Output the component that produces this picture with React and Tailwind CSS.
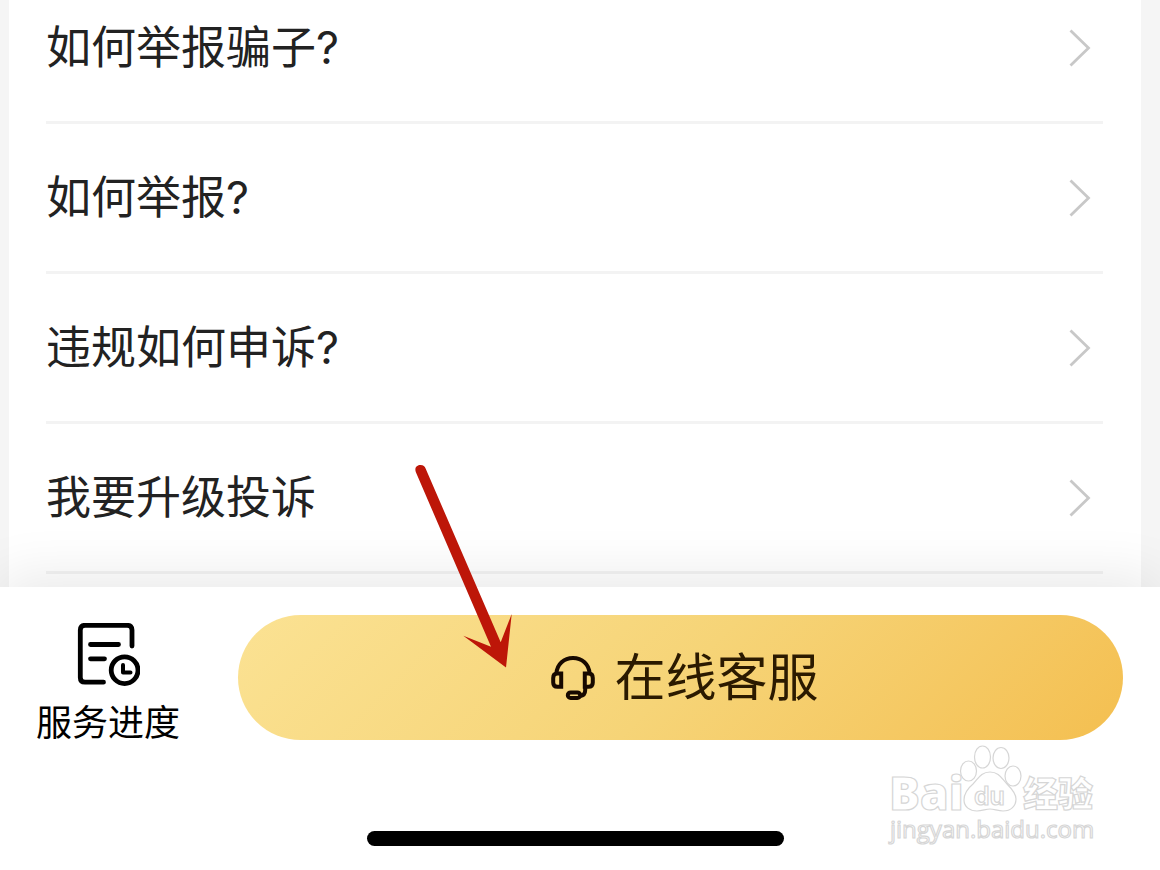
const questions = ['如何举报骗子?', '如何举报?', '违规如何申诉?', '我要升级投诉'];

function ChevronIcon() {
  return (
    <svg viewBox="0 0 24 40" className="h-10 w-6 shrink-0" fill="none" stroke="#c8c8c8" strokeWidth="2.8" aria-hidden="true">
      <path d="M3.5 2.5L21.5 20L3.5 37.5" />
    </svg>
  );
}

function ProgressIcon() {
  return (
    <svg viewBox="-2 1 64 64" className="size-16" fill="none" stroke="#000" strokeWidth="4.8" strokeLinecap="round" strokeLinejoin="round" aria-hidden="true">
      <path d="M54 24V8Q54 3.3 49.3 3.3H7Q2.3 3.3 2.3 8V55.5Q2.3 60.2 7 60.2H25.5" />
      <path d="M12.5 22.5H40.5M12.5 36.8H26.5" />
      <circle cx="46.6" cy="48.2" r="13.4" />
      <path d="M45 43V50.5H52.5" strokeWidth="4" />
    </svg>
  );
}

function HeadsetIcon() {
  return (
    <svg viewBox="0 0 44 46" className="h-[46px] w-11 shrink-0" fill="none" stroke="#170900" strokeWidth="4" aria-hidden="true">
      <path d="M5.4 18.5C6 9 13 3 22 3S38 9 38.6 18.5" />
      <path d="M10.2 18.6H6.5Q2.2 18.6 2.2 23V27.5Q2.2 31.8 6.5 31.8H10.2Z" />
      <path d="M33.8 18.6H37.5Q41.8 18.6 41.8 23V27.5Q41.8 31.8 37.5 31.8H33.8Z" />
      <path d="M34.2 31.5V35Q34.2 40.5 29 41" />
      <rect x="16.8" y="37.4" width="12.4" height="5.6" rx="2.8" />
    </svg>
  );
}

function PointerArrow() {
  return (
    <svg viewBox="0 0 104 210" className="pointer-events-none absolute top-[460px] left-[410px] z-20 h-[210px] w-[104px]" fill="#bd1608" aria-hidden="true">
      <path d="M6 12.5C4 7.5 7 5 10.5 5C13.5 5 14.8 6.5 15.5 8.2L90.7 182.3L101.7 154L96 207.5L53.3 175.7L81 186.7Z" />
    </svg>
  );
}

function Watermark() {
  return (
    <svg viewBox="0 0 220 110" className="pointer-events-none absolute right-[60px] bottom-5 h-[110px] w-[220px]" fill="#fff" stroke="#d6d6d6" strokeWidth="1.2">
      <text x="9" y="70" fontSize="46" fontWeight="800" fontFamily="'Open Sans', sans-serif">Bai</text>
      <ellipse cx="88.5" cy="31" rx="8" ry="10" />
      <ellipse cx="102.5" cy="17" rx="8" ry="11" />
      <ellipse cx="121" cy="18" rx="8" ry="10.5" />
      <ellipse cx="133" cy="36" rx="8" ry="10" />
      <path d="M110 32C101 32 98 39 93 44C87 49 84 54 84 60C84 67 90 71 97 71C102 71 106 69 110 69S118 71 123 71C131 71 136 66 136 59C136 53 131 48 127 44C122 39 119 32 110 32Z" />
      <text x="94" y="65" fontSize="25" fontWeight="600" fontFamily="Inter, sans-serif">du</text>
      <text x="143" y="67" fontSize="35" fontWeight="900" fontFamily="'Noto Sans CJK SC', sans-serif">经验</text>
      <text x="10" y="98" fontSize="24" fontFamily="'Open Sans', sans-serif">jingyan.baidu.com</text>
    </svg>
  );
}

function App() {
  return (
    <div className="relative flex h-screen flex-col overflow-hidden bg-[#f5f5f5] font-[Inter,'Noto_Sans_CJK_SC',sans-serif]">
      {/* Question list, scrolled to its end */}
      <main className="mr-[19px] ml-[9px] flex min-h-0 flex-1 flex-col justify-end bg-white pr-[38px] pb-[13px] pl-[37px]">
        <ul>
          {questions.map((question) => (
            <li key={question} className="border-b-3 border-[#f3f3f3]">
              <a href="#" className="flex h-[147px] items-center justify-between pr-3 text-[45px] leading-none text-[#222]">
                <span>{question}</span>
                <ChevronIcon />
              </a>
            </li>
          ))}
        </ul>
      </main>

      {/* Bottom bar */}
      <footer className="relative z-10 shrink-0 bg-white pt-7 pb-6 shadow-[0_-10px_52px_rgba(0,0,0,0.09)]">
        <div className="flex items-start pr-[37px] pl-9">
          <button type="button" className="mr-[58px] flex shrink-0 flex-col items-center pt-2 text-[36px] leading-[48px] text-black">
            <ProgressIcon />
            <span className="mt-3">服务进度</span>
          </button>
          <button type="button" className="flex h-[125px] flex-1 items-center justify-center gap-5 rounded-full bg-linear-135 from-[#fbe293] via-[#f6d477] to-[#f4bf50] pl-2 text-[51px] leading-none text-[#2b1a00]">
            <HeadsetIcon />
            <span>在线客服</span>
          </button>
        </div>
        <div className="mt-[84px] pr-[9px]">
          <div className="mx-auto h-[15px] w-[417px] max-w-full rounded-full bg-black" />
        </div>
        <Watermark />
      </footer>

      <PointerArrow />
    </div>
  );
}

export default App;
